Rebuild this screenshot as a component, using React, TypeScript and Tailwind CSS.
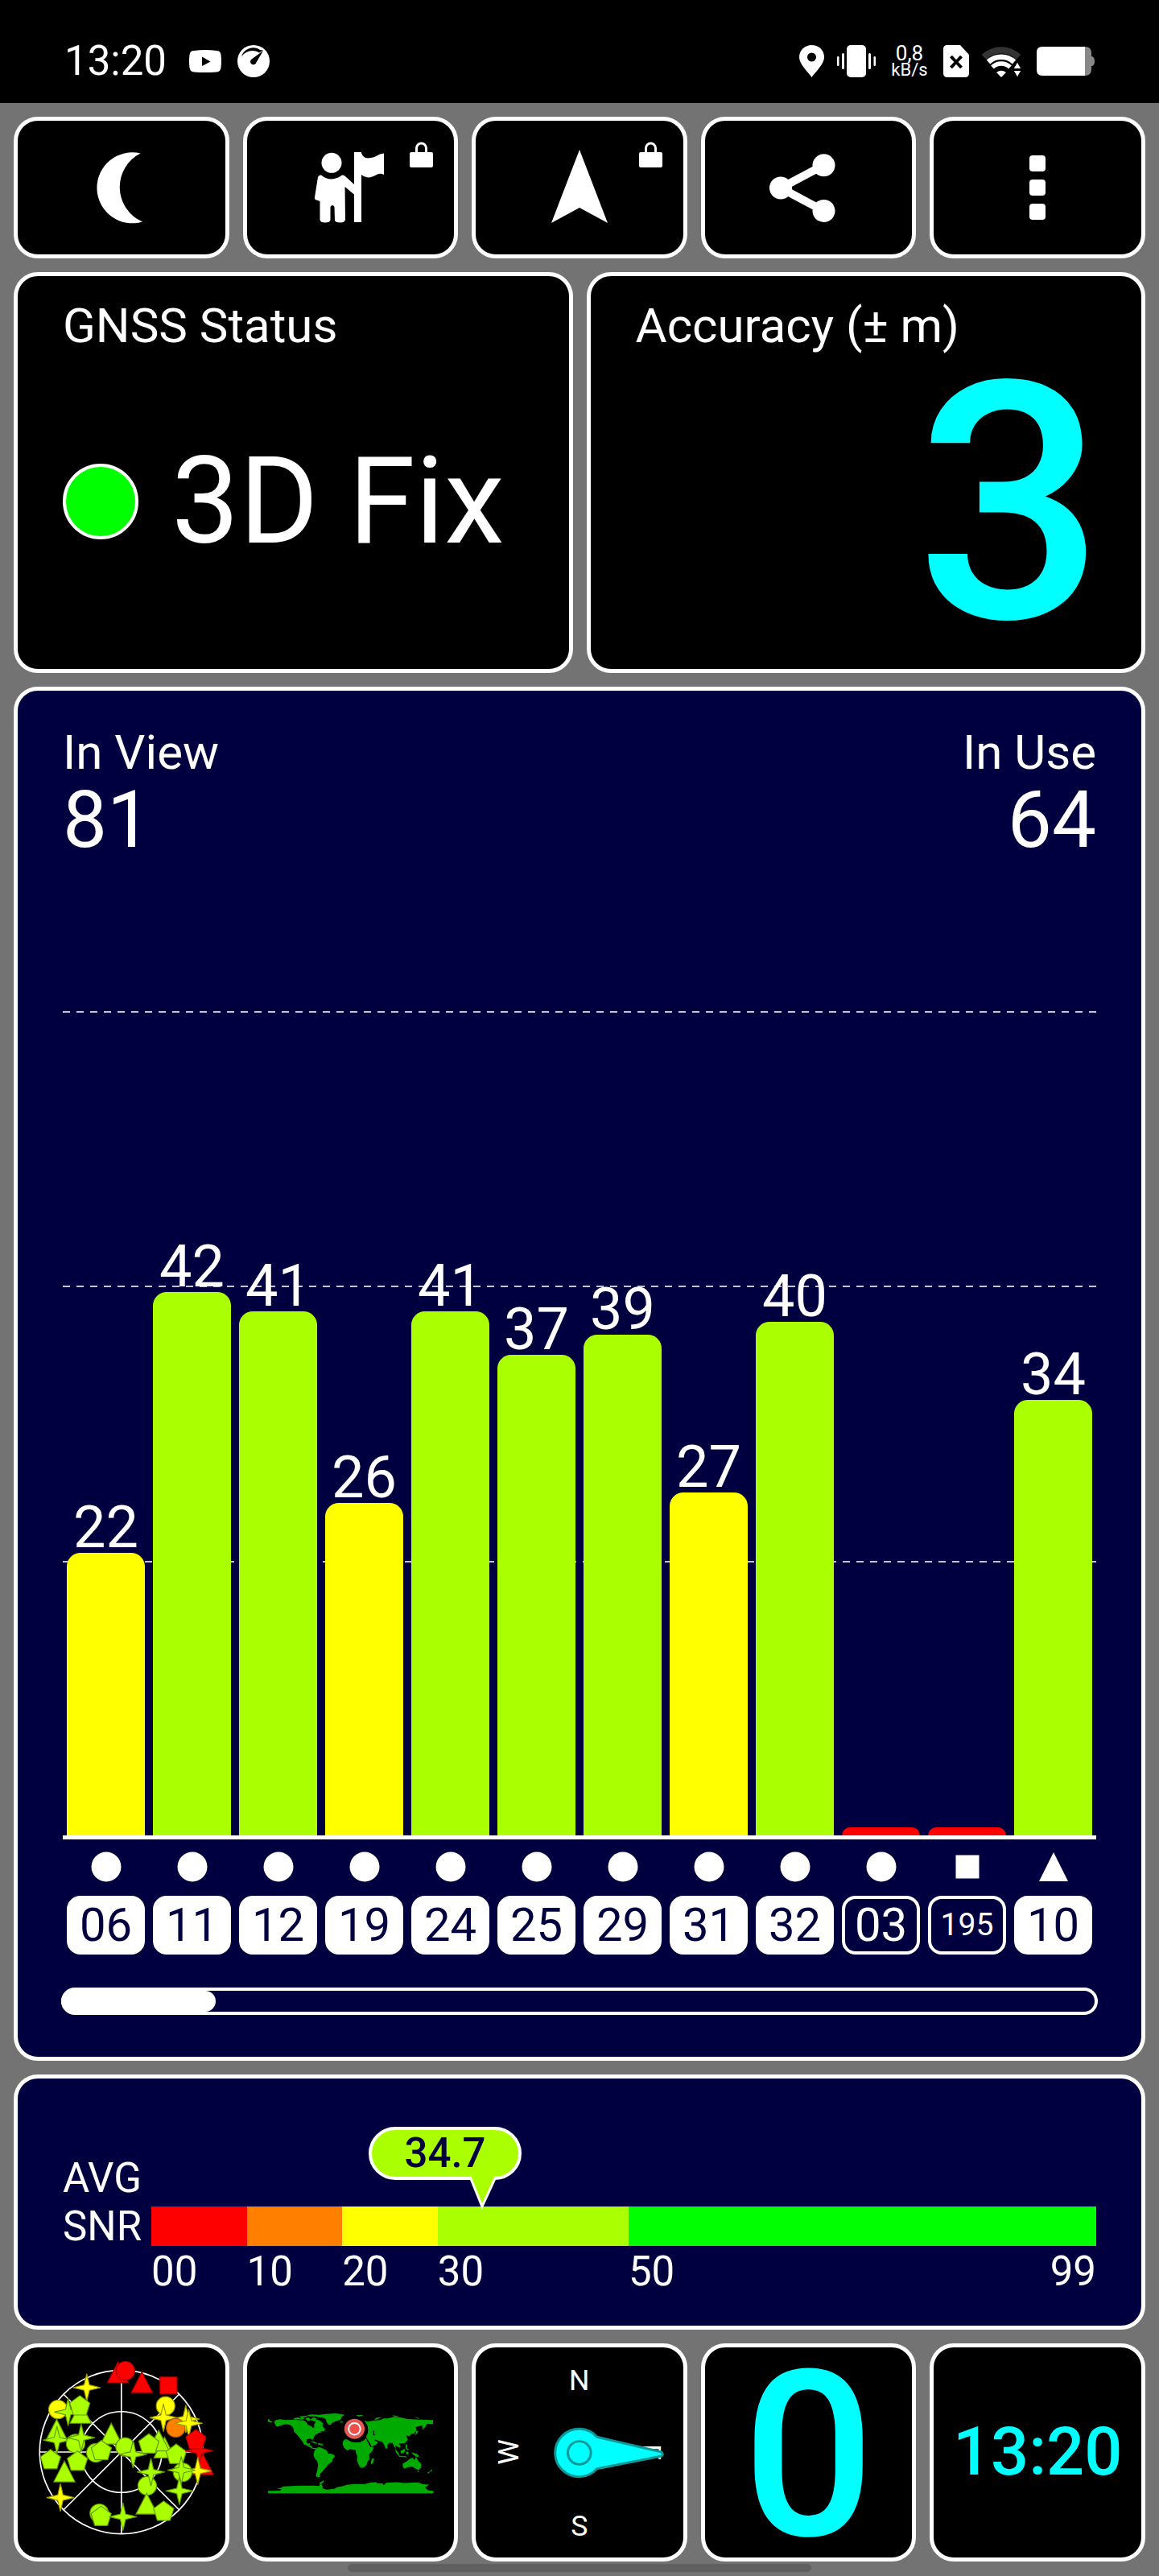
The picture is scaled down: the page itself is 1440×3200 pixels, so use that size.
import type { ReactNode } from "react";

type Shape = "circle" | "square" | "triangle" | "pentagon" | "star";

const satellites: {
  id: string;
  snr?: number;
  level: number;
  tone: string;
  shape: Shape;
  used: boolean;
}[] = [
  { id: "06", snr: 22, level: 34.3, tone: "bg-[#ffff00]", shape: "circle", used: true },
  { id: "11", snr: 42, level: 65.9, tone: "bg-[#aaff00]", shape: "circle", used: true },
  { id: "12", snr: 41, level: 63.6, tone: "bg-[#aaff00]", shape: "circle", used: true },
  { id: "19", snr: 26, level: 40.3, tone: "bg-[#ffff00]", shape: "circle", used: true },
  { id: "24", snr: 41, level: 63.6, tone: "bg-[#aaff00]", shape: "circle", used: true },
  { id: "25", snr: 37, level: 58.3, tone: "bg-[#aaff00]", shape: "circle", used: true },
  { id: "29", snr: 39, level: 60.7, tone: "bg-[#aaff00]", shape: "circle", used: true },
  { id: "31", snr: 27, level: 41.6, tone: "bg-[#ffff00]", shape: "circle", used: true },
  { id: "32", snr: 40, level: 62.3, tone: "bg-[#aaff00]", shape: "circle", used: true },
  { id: "03", level: 1, tone: "bg-[#ff0000]", shape: "circle", used: false },
  { id: "195", level: 1, tone: "bg-[#ff0000]", shape: "square", used: false },
  { id: "10", snr: 34, level: 52.8, tone: "bg-[#aaff00]", shape: "triangle", used: true },
];

const scale = [
  { label: "00", span: 10, tone: "bg-[#ff0000]" },
  { label: "10", span: 10, tone: "bg-[#ff8000]" },
  { label: "20", span: 10, tone: "bg-[#ffff00]" },
  { label: "30", span: 20, tone: "bg-[#aaff00]" },
  { label: "50", span: 49, tone: "bg-[#00ff00]" },
];

const palette = {
  lime: ["#aaff00", "#5f9900"],
  yellow: ["#ffff00", "#999900"],
  orange: ["#ff8000", "#a85a10"],
  red: ["#ff0000", "#a00000"],
};

const sky: [Shape, number, number, keyof typeof palette][] = [
  ["triangle", 440, 174, "red"],
  ["circle", 468, 167, "red"],
  ["triangle", 530, 211, "red"],
  ["square", 630, 222, "red"],
  ["circle", 619, 299, "yellow"],
  ["star", 611, 343, "yellow"],
  ["star", 695, 348, "yellow"],
  ["circle", 657, 381, "orange"],
  ["star", 706, 364, "yellow"],
  ["star", 323, 230, "yellow"],
  ["circle", 215, 312, "yellow"],
  ["star", 253, 322, "lime"],
  ["triangle", 300, 326, "lime"],
  ["pentagon", 297, 298, "lime"],
  ["triangle", 210, 389, "lime"],
  ["star", 211, 427, "lime"],
  ["circle", 281, 440, "lime"],
  ["star", 302, 418, "lime"],
  ["triangle", 415, 404, "lime"],
  ["circle", 357, 475, "lime"],
  ["pentagon", 378, 466, "lime"],
  ["circle", 467, 453, "lime"],
  ["star", 497, 481, "lime"],
  ["triangle", 615, 456, "lime"],
  ["triangle", 593, 430, "lime"],
  ["pentagon", 556, 441, "lime"],
  ["pentagon", 659, 480, "lime"],
  ["triangle", 759, 519, "red"],
  ["star", 745, 467, "red"],
  ["pentagon", 733, 425, "red"],
  ["star", 740, 543, "yellow"],
  ["circle", 683, 548, "lime"],
  ["star", 678, 540, "lime"],
  ["star", 671, 618, "lime"],
  ["circle", 550, 599, "lime"],
  ["star", 564, 547, "lime"],
  ["triangle", 548, 667, "lime"],
  ["pentagon", 612, 694, "lime"],
  ["circle", 370, 702, "lime"],
  ["pentagon", 377, 713, "lime"],
  ["star", 459, 715, "lime"],
  ["pentagon", 187, 500, "lime"],
  ["pentagon", 288, 506, "lime"],
  ["triangle", 239, 546, "lime"],
  ["star", 224, 643, "yellow"],
];

const shapePath: Record<Shape, string> = {
  circle: "M-35 0a35 35 0 1 0 70 0a35 35 0 1 0 -70 0Z",
  square: "M-32 -32H32V32H-32Z",
  triangle: "M0 -40L40 38H-40Z",
  pentagon: "M0 -38L38 -10L24 35H-24L-38 -10Z",
  star: "M0 -52L10 -10L52 0L10 10L0 52L-10 10L-52 0L-10 -10Z",
};

const frame = "rounded-[30px] border-[5px] border-white";

function ToolButton({ label, locked, children }: { label: string; locked?: boolean; children: ReactNode }) {
  return (
    <button
      type="button"
      aria-label={label}
      className={`relative flex h-44 items-center justify-center bg-black ${frame}`}
    >
      <svg viewBox="0 0 88 88" className="size-[88px] overflow-visible fill-white">
        {children}
      </svg>
      {locked && (
        <svg viewBox="0 0 29 32" className="absolute top-[26px] right-[26px] h-8 w-[29px]">
          <rect y="13" width="29" height="19" rx="2" fill="#fff" />
          <path d="M8.500 14V8a6 6 0 0 1 12 0v6" fill="none" stroke="#fff" strokeWidth="3" />
        </svg>
      )}
    </button>
  );
}

function Tile({ label, children }: { label: string; children: ReactNode }) {
  return (
    <button
      type="button"
      aria-label={label}
      className={`flex h-[271px] items-center justify-center bg-black ${frame}`}
    >
      {children}
    </button>
  );
}

function Marker({ shape }: { shape: Shape }) {
  return (
    <svg viewBox="0 0 38 38" className="size-[38px] fill-white">
      {shape === "circle" && <circle cx="19" cy="19" r="18.500" />}
      {shape === "square" && <rect x="4.500" y="4.500" width="29" height="29" />}
      {shape === "triangle" && <path d="M19 1L37 37H1Z" />}
    </svg>
  );
}

function StatusBar() {
  return (
    <header className="flex h-32 items-center justify-between bg-black px-20 pt-6 text-white">
      <div className="flex items-center">
        <time className="text-[51px] leading-[60px]">13:20</time>
        <svg viewBox="0 0 40 28" className="ml-7 h-7 w-10">
          <path d="M6 1Q20 -1 34 1Q39 1 39.500 6Q40.500 14 39.500 22Q39 27 34 27.500Q20 28.500 6 27.500Q1 27 .5 22Q-.5 14 .5 6Q1 1 6 1Z" fill="#fff" />
          <path d="M16 8.500L26.500 14.500L16 20Z" fill="#000" />
        </svg>
        <svg viewBox="0 0 40 40" className="ml-5 size-10">
          <circle cx="20" cy="20" r="20" fill="#fff" />
          <path d="M5 14C8 4 21 0 28 6L32 6.500L27 9.500C19 5 11 7 5 14Z" fill="#000" />
          <path d="M32 7L23.500 21.500A3.800 3.800 0 1 1 17 18Z" fill="#000" />
        </svg>
      </div>
      <div className="flex items-center">
        <svg viewBox="0 0 31 40" className="h-10 w-[31px]">
          <path d="M15.500 0C24 0 31 6.500 31 15C31 24 20 33 15.500 40C11 33 0 24 0 15C0 6.500 7 0 15.500 0ZM15.500 9.500a5.500 5.500 0 1 0 0 11a5.500 5.500 0 1 0 0 -11Z" fill="#fff" fillRule="evenodd" />
        </svg>
        <svg viewBox="0 0 48 40" className="ml-4 h-10 w-12 fill-white">
          <rect x="12" width="24" height="40" rx="5" />
          <rect x="6" y="10" width="3" height="20" rx="1.500" />
          <rect y="14" width="2.500" height="12" rx="1.200" />
          <rect x="39" y="10" width="3" height="20" rx="1.500" />
          <rect x="45.500" y="14" width="2.500" height="12" rx="1.200" />
        </svg>
        <div className="ml-[18px] flex w-12 flex-col items-center">
          <span className="text-[26px] leading-[22px]">0,8</span>
          <span className="text-[22px] leading-5">kB/s</span>
        </div>
        <svg viewBox="0 0 32 40" className="ml-[18px] h-10 w-8">
          <path d="M5 0H21L32 12V35Q32 40 27 40H5Q0 40 0 35V5Q0 0 5 0Z" fill="#fff" />
          <path d="M9.500 14L22.500 28M22.500 14L9.500 28" stroke="#000" strokeWidth="4" />
        </svg>
        <svg viewBox="0 0 49 40" className="ml-4 h-10 w-[49px]">
          <path d="M2.500 15A31 31 0 0 1 45.500 15" fill="none" stroke="#333" strokeWidth="8" />
          <g fill="none" stroke="#fff">
            <path d="M8 21A23.500 23.500 0 0 1 40 21" strokeWidth="6.500" />
            <path d="M13 27.500A16 16 0 0 1 35 27.500" strokeWidth="5.500" />
          </g>
          <path d="M18 34Q24 29.500 30 34L24 40Z" fill="#fff" />
          <path d="M44 21L49 29.500H39ZM44 40L49 31.500H39Z" fill="#fff" stroke="#000" strokeWidth="1" />
        </svg>
        <svg viewBox="0 0 72 36" className="ml-[19px] h-9 w-[72px]">
          <path d="M7 0H60V36H7Q0 36 0 29V7Q0 0 7 0Z" fill="#fff" />
          <path d="M60 0Q68 0 68 8V28Q68 36 60 36ZM68 12Q72 12 72 18Q72 24 68 24Z" fill="#888" />
        </svg>
      </div>
    </header>
  );
}

function SkyPlot() {
  return (
    <svg viewBox="64 79 778 789" className="size-full">
      <g fill="none" stroke="#fff" strokeWidth="5">
        <circle cx="453" cy="472" r="307" />
        <circle cx="453" cy="472" r="152" />
        <path d="M453 165V779M146 472H760M236 255L670 689M670 255L236 689" />
      </g>
      {sky.map(([shape, x, y, tone], i) => (
        <path
          key={i}
          d={shapePath[shape]}
          transform={`translate(${x} ${y})`}
          fill={palette[tone][0]}
          stroke={palette[tone][1]}
          strokeWidth="3.500"
        />
      ))}
    </svg>
  );
}

function WorldMap() {
  return (
    <svg viewBox="48 79 778 789" className="size-full">
      <g fill="#00aa00">
        <path d="M150 362L152 353L170 349L190 352L215 351L240 352L262 353L272 362L276 370L290 375L294 382L300 378L299 368L305 360L302 352L312 351L322 356L330 364L332 376L344 390L336 388L340 394L325 394L326 398L316 400L302 409L297 420L293 428L287 421L272 424L270 434L276 441L284 438L282 446L291 450L294 457L306 457L304 461L296 461L286 455L270 446L262 443L250 424L236 408L224 396L220 378L208 370L195 368L182 369L172 374L160 377L155 372Z" />
        <path d="M126 348L134 350L132 354L144 358L138 361L126 359Z" />
        <path d="M222 346L238 341L246 345L258 341L262 348L250 350L238 348L226 351Z" />
        <path d="M242 338L272 335L275 340L250 342ZM266 346L280 342L286 350L296 342L308 344L306 350L322 354L334 366L326 372L314 360L300 356L286 352L276 356Z" />
        <path d="M272 334L290 331L318 332L345 329L378 327L400 329L414 333L404 338L402 346L396 352L378 357L368 362L362 370L352 368L346 360L344 350L334 343L318 341L300 338L284 338Z" />
        <path d="M397 358L408 357L405 362L398 362Z" />
        <path d="M285 431L300 433L312 439L306 440L292 435ZM314 438L332 442L330 450L324 445L314 444Z" />
        <path d="M306 458L318 453L335 460L347 466L352 478L366 479L378 486L370 498L366 510L352 518L346 528L338 536L330 546L323 552L320 566L308 566L306 558L311 542L314 522L312 508L303 498L297 484L300 468Z" />
        <path d="M414 424L430 425L450 436L470 436L486 428L494 420L502 436L510 452L524 455L518 468L506 480L507 500L500 508L496 520L488 529L474 532L468 522L460 503L462 488L456 475L456 465L436 461L424 466L412 456L407 444L408 432Z" />
        <path d="M521 494L525 500L520 515L514 518L512 508L517 498Z" />
        <path d="M478 420L470 385L490 354L500 358L520 354L548 352L560 346L575 346L600 340L625 342L650 348L690 350L720 351L746 352V366L730 366L722 368L714 380L706 386L706 372L690 376L680 378L684 388L678 400L662 406L656 414L648 408L646 416L652 426L640 438L626 440L618 440L624 450L620 456L612 452L606 446L604 452L610 462L600 452L594 438L582 438L574 446L576 456L568 460L562 444L556 434L540 430L526 424L528 430L540 434L534 443L516 452L508 444L498 424L494 412Z" />
        <path d="M604 460L614 472L622 486L616 485L606 472ZM616 486L644 488L648 492L620 490ZM624 468L638 460L642 466L636 476L626 478ZM644 442L650 446L648 456L656 464L650 466L643 456ZM644 470L654 472L652 482L646 480ZM664 473L686 479L696 492L682 489L672 482Z" />
        <path d="M690 394L686 404L674 410L680 404L684 392ZM715 373L718 376L704 390L708 380Z" />
        <path d="M633 514L646 508L658 498L670 493L676 502L682 490L690 504L702 518L700 532L692 540L680 534L668 527L652 529L638 535L632 526ZM687 543L694 543L690 549Z" />
        <path d="M742 537L742 545L734 544ZM736 546L728 553L724 551L732 545Z" />
        <path d="M458 333L484 333L478 337L464 338ZM526 349L536 342L556 341L542 346L530 352ZM592 334L610 336L620 340L600 338ZM676 343L696 344L690 347Z" />
        <path d="M126 618L172 617L176 612L160 609L178 606L182 601L215 600L250 598L300 598L318 600L322 592L318 588L336 578L334 586L326 592L332 602L330 608L345 613L375 610L385 604L412 599L420 595L455 592L490 592L515 586L535 585L536 590L556 589L560 596L572 587L610 585L640 588L690 586L705 592L733 595L716 604L722 612L733 617H747V627H126Z" />
      </g>
      <g fill="#000">
        <path d="M519 394L525 392L524 400L528 408L523 410Z" />
        <path d="M496 424L500 424L514 448L511 452Z" />
        <circle cx="455" cy="389" r="47" />
      </g>
      <circle cx="451" cy="385" r="38" fill="#e55a58" />
      <circle cx="451" cy="385" r="22" fill="#ec504b" stroke="#fff" strokeWidth="6" />
    </svg>
  );
}

function Compass() {
  return (
    <svg viewBox="0 0 260 263" className="size-full" fontSize="36" textAnchor="middle" fill="#fff">
      <text x="130" y="53">N</text>
      <text x="130" y="236">S</text>
      <text transform="translate(53 131) rotate(-90)">W</text>
      <text transform="translate(207 131) rotate(90)">E</text>
      <path
        d="M152 112A30 30 0 1 0 152 152L233 136Q236 134 233 131Z"
        fill="#00ffff"
        stroke="#0a9a9a"
        strokeWidth="3"
        strokeLinejoin="round"
      />
      <circle cx="130" cy="132" r="14.500" fill="#00ffff" stroke="#0a9a9a" strokeWidth="3" />
    </svg>
  );
}

export default function App() {
  return (
    <div className="min-h-screen bg-[#737373] font-['Roboto',sans-serif] text-white">
      <StatusBar />
      <main className="flex flex-col gap-[17px] px-[17px] pt-[17px]">
        <nav className="grid grid-cols-5 gap-[17px]">
          <ToolButton label="Night mode">
            <path d="M67.500 1.500A44 44 0 1 0 70 86.500A47 47 0 0 1 67.500 1.500Z" />
          </ToolButton>
          <ToolButton label="Guide" locked>
            <circle cx="21" cy="13.300" r="12.500" />
            <path d="M4 31Q5 28 8 28.500Q14 33.500 21 33.500Q28 33 34 28.500Q36 28 38 30L50 41V53.500L37.500 43L38 84Q37 87.500 32 87.500Q26 87.500 25 85L24.500 68Q22 64 19.500 68L19.500 84Q19 87.500 13 87.500Q7 87.500 6.500 84V61L1 59Q-.5 58 0 56Z" />
            <rect x="49" width="9" height="87" />
            <path d="M58 1Q60 7 66 7.500Q74 7 80 3Q83 1.500 86 1.500V28Q82 26 78 27.500Q70 32 66 31.500Q61 31 58 28Z" />
          </ToolButton>
          <ToolButton label="Heading" locked>
            <path d="M44 -3L79 88L44 69L9 88Z" />
          </ToolButton>
          <ToolButton label="Share">
            <circle cx="9" cy="44.500" r="14" />
            <circle cx="62.500" cy="16.300" r="14" />
            <circle cx="62.500" cy="73" r="14" />
            <path d="M62.500 16.300L9 44.500L62.500 73" fill="none" stroke="#fff" strokeWidth="10" />
          </ToolButton>
          <ToolButton label="More options">
            <rect x="34" y="4" width="20" height="20" rx="4" />
            <rect x="34" y="34" width="20" height="20" rx="4" />
            <rect x="34" y="64" width="20" height="20" rx="4" />
          </ToolButton>
        </nav>

        <div className="grid grid-cols-2 gap-[17px]">
          <section className={`flex min-h-[498px] flex-col bg-black px-14 pt-8 pb-5 ${frame}`}>
            <h2 className="text-[60px] leading-[60px]">GNSS Status</h2>
            <div className="flex flex-1 items-center gap-[41px]">
              <span className="size-[94px] shrink-0 rounded-full border-4 border-white bg-[#00ff00]" />
              <p className="text-[150px] leading-[150px] whitespace-nowrap">3D Fix</p>
            </div>
          </section>
          <section className={`flex min-h-[498px] flex-col bg-black pt-8 pr-[46px] pb-3 pl-14 ${frame}`}>
            <h2 className="text-[60px] leading-[60px]">Accuracy (± m)</h2>
            <p className="flex flex-1 items-center justify-end text-[412px] leading-[340px] font-medium text-[#00ffff]">
              3
            </p>
          </section>
        </div>

        <section className={`bg-[#000040] px-14 pt-[47px] pb-[52px] ${frame}`}>
          <dl className="flex justify-between">
            <div>
              <dt className="text-[60px] leading-[60px]">In View</dt>
              <dd className="text-[98px] leading-[108px]">81</dd>
            </div>
            <div className="text-right">
              <dt className="text-[60px] leading-[60px]">In Use</dt>
              <dd className="text-[98px] leading-[108px]">64</dd>
            </div>
          </dl>

          <div className="relative mt-[183px] h-[1029px] border-b-[5px] border-white">
            <div className="absolute inset-0 flex flex-col">
              {[0, 1, 2].map((n) => (
                <div key={n} className="flex-1">
                  <div className="h-0.5 bg-[repeating-linear-gradient(90deg,#c4c4d4_0_9px,transparent_9px_17px)]" />
                </div>
              ))}
            </div>
            <div className="relative flex h-full">
              {satellites.map((s) => (
                <div key={s.id} className="flex flex-1 flex-col items-stretch justify-end px-[5px]">
                  {s.snr && <span className="text-center text-[72px] leading-[62px]">{s.snr}</span>}
                  <div className={`shrink-0 rounded-t-[17px] ${s.tone}`} style={{ height: `${s.level}%` }} />
                </div>
              ))}
            </div>
          </div>

          <ul className="mt-[15px] flex">
            {satellites.map((s) => (
              <li key={s.id} className="flex flex-1 flex-col items-center gap-[17px] px-[5px]">
                <Marker shape={s.shape} />
                <span
                  className={`flex h-[73px] w-full items-center justify-center rounded-[17px] border-4 border-white ${
                    s.used ? "bg-white text-[#000040]" : "text-white"
                  } ${s.id.length > 2 ? "text-[39px]" : "text-[58px]"}`}
                >
                  {s.id}
                </span>
              </li>
            ))}
          </ul>

          <div className="-mx-0.5 mt-[41px] h-[34px] rounded-full border-4 border-white">
            <div className="-ml-1 h-full w-[15%] rounded-full bg-white" />
          </div>
        </section>

        <section className={`flex items-end bg-[#000040] px-14 pt-[60px] pb-[38px] ${frame}`}>
          <h2 className="mb-[55px] w-[110px] text-[51px] leading-[60px]">
            AVG
            <br />
            SNR
          </h2>
          <div className="flex-1">
            <div className="relative mb-[33px] ml-[23%] flex h-[66px] w-[190px] items-center justify-center rounded-full border-4 border-white bg-[#aaff00]">
              <output className="text-[51px] leading-[60px] font-medium text-[#000040]">34.7</output>
              <svg viewBox="0 0 34 42" className="absolute top-[57px] left-[121px] h-[42px] w-[34px]">
                <path d="M1 0H33L16 37Z" fill="#aaff00" />
                <path d="M1 1L16 38L33 1" fill="none" stroke="#fff" strokeWidth="3" />
              </svg>
            </div>
            <div className="flex">
              {scale.map((s, i) => (
                <div key={s.label} style={{ flexGrow: s.span }} className="basis-0">
                  <div className={`h-[49px] ${s.tone}`} />
                  <div className="flex justify-between pt-0.5 text-[51px] leading-[59px]">
                    <span>{s.label}</span>
                    {i === scale.length - 1 && <span>99</span>}
                  </div>
                </div>
              ))}
            </div>
          </div>
        </section>

        <nav className="grid grid-cols-5 gap-[17px]">
          <Tile label="Sky view">
            <SkyPlot />
          </Tile>
          <Tile label="World map">
            <WorldMap />
          </Tile>
          <Tile label="Compass">
            <Compass />
          </Tile>
          <Tile label="Speed">
            <span className="pt-2 text-[288px] leading-[252px] font-medium text-[#00ffff]">0</span>
          </Tile>
          <Tile label="Time">
            <span className="text-[83px] font-medium text-[#00ffff]">13:20</span>
          </Tile>
        </nav>
      </main>
      <div className="mx-auto mt-[3px] mb-1 h-2.5 w-2/5 rounded-full bg-[#606060]" />
    </div>
  );
}
